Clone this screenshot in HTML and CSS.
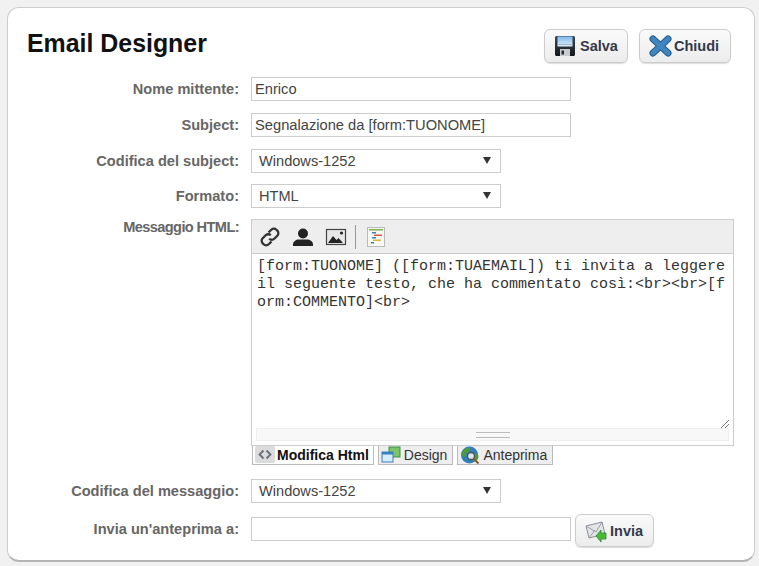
FILE: index.html
```html
<!DOCTYPE html>
<html lang="en">
<head>
  <meta charset="UTF-8">
  <title>Email Designer</title>
  <link rel="stylesheet" href="styles.css">
</head>
<body>
  <div class="panel">
    <div class="head">
      <h1>Email Designer</h1>
      <div class="head-btns">
        <button class="btn btn-salva" type="button">
          <svg width="22" height="22" viewBox="0 0 22 22">
            <defs>
              <linearGradient id="disk" x1="0" y1="0" x2="0" y2="1">
                <stop offset="0" stop-color="#3d4a55"/>
                <stop offset="1" stop-color="#15181b"/>
              </linearGradient>
              <linearGradient id="label" x1="0" y1="0" x2="0" y2="1">
                <stop offset="0" stop-color="#7db8ea"/>
                <stop offset="1" stop-color="#e3effa"/>
              </linearGradient>
            </defs>
            <path d="M1 2.500C1 1.700 1.700 1 2.500 1H20l1 1v17.500c0 .8-.7 1.500-1.500 1.500h-17C1.700 21 1 20.300 1 19.500z" fill="url(#disk)"/>
            <rect x="3.500" y="1.500" width="15" height="10" fill="url(#label)"/>
            <rect x="3.500" y="9" width="15" height="1" fill="#9fb6c8"/>
            <rect x="6" y="14" width="10" height="7" fill="#c8ccd0"/>
            <rect x="7.500" y="15.500" width="2.500" height="4" fill="#23282d"/>
          </svg>
          Salva
        </button>
        <button class="btn btn-chiudi" type="button">
          <svg width="23" height="22" viewBox="0 0 23 22" fill="none" stroke-linecap="round">
            <path d="M4 4l15 14M19 4L4 18" stroke="#245a8a" stroke-width="7"/>
            <path d="M4 4l15 14M19 4L4 18" stroke="#3f86c0" stroke-width="5"/>
          </svg>
          Chiudi
        </button>
      </div>
    </div>

    <div class="row row-first">
      <label>Nome mittente:</label>
      <input class="field" type="text" value="Enrico">
    </div>
    <div class="row">
      <label>Subject:</label>
      <input class="field" type="text" value="Segnalazione da [form:TUONOME]">
    </div>
    <div class="row">
      <label>Codifica del subject:</label>
      <div class="select">Windows-1252<span class="arrow"></span></div>
    </div>
    <div class="row row-tight">
      <label>Formato:</label>
      <div class="select">HTML<span class="arrow"></span></div>
    </div>

    <div class="row row-tight">
      <label class="label-top">Messaggio HTML:</label>
      <div class="editor">
        <div class="toolbar">
          <svg class="tool" width="22" height="22" viewBox="0 0 22 22" fill="none" stroke="#333" stroke-width="2.300">
            <path d="M9.500 6.500l2.800-2.800a3.600 3.600 0 0 1 5.100 0l.9.9a3.600 3.600 0 0 1 0 5.100l-3 3a3.600 3.600 0 0 1-5.100 0"/>
            <path d="M12.500 15.500l-2.800 2.800a3.600 3.600 0 0 1-5.100 0l-.9-.9a3.600 3.600 0 0 1 0-5.100l3-3a3.600 3.600 0 0 1 5.100 0"/>
          </svg>
          <svg class="tool" width="22" height="22" viewBox="0 0 22 22" fill="#222">
            <circle cx="11" cy="7.500" r="5"/>
            <path d="M1 20v-1.500c0-3 3-5 6-5h8c3 0 6 2 6 5V20z"/>
          </svg>
          <svg class="tool" width="22" height="22" viewBox="0 0 22 22">
            <rect x="1.500" y="3.500" width="19" height="15" fill="#e8e8e8" stroke="#444" stroke-width="1.200"/>
            <path d="M3 17l5-7 3.500 4 2-2 4.500 5z" fill="#222"/>
            <circle cx="16.500" cy="7" r="1.600" fill="#222"/>
          </svg>
          <span class="tool-sep"></span>
          <svg class="tool tool-tree" width="20" height="22" viewBox="0 0 20 22">
            <rect x="1.500" y="1.500" width="17" height="19" fill="#f8f8f4" stroke="#b8bcb8"/>
            <rect x="3" y="3" width="14" height="1.500" fill="#7fb24a"/>
            <rect x="6" y="6" width="4" height="1.500" fill="#3a7fc0"/>
            <rect x="8" y="8.500" width="8" height="1.500" fill="#d8584a"/>
            <rect x="6" y="11" width="4" height="1.500" fill="#3a7fc0"/>
            <rect x="7" y="13.500" width="8" height="1.500" fill="#d8b84a"/>
            <rect x="5" y="16" width="3" height="1.500" fill="#3a8f5a"/>
          </svg>
        </div>
        <div class="code-box">
          <div class="code">[form:TUONOME] ([form:TUAEMAIL]) ti invita a leggere il seguente testo, che ha commentato così:&lt;br&gt;&lt;br&gt;[form:COMMENTO]&lt;br&gt;</div>
          <div class="grip"></div>
          <div class="scroll"><span class="scroll-mark"></span></div>
        </div>
        <div class="tabs">
          <div class="tab tab-on">
            <svg width="20" height="17" viewBox="0 0 20 17">
              <rect x="0" y="0" width="20" height="17" rx="2" fill="#dcdcdc"/>
              <path d="M8.500 4.500L4.500 8.500l4 4M11.500 4.500l4 4-4 4" fill="none" stroke="#66707a" stroke-width="1.800"/>
            </svg>
            Modifica Html
          </div>
          <div class="tab">
            <svg width="20" height="17" viewBox="0 0 20 17">
              <rect x="8" y="1" width="11" height="10" fill="#7cc46a" stroke="#3f8f4a"/>
              <rect x="1" y="6" width="11" height="10" fill="#d8ecfa" stroke="#3a7fc0"/>
              <rect x="1" y="6" width="11" height="2.500" fill="#3a7fc0"/>
            </svg>
            Design
          </div>
          <div class="tab">
            <svg width="20" height="18" viewBox="0 0 20 18">
              <circle cx="9.500" cy="9" r="8.500" fill="#2f7fb8"/>
              <path d="M3 5c2-3 6-4 7-2.500S9 6 7 7s-1 5-3 4-3-4-1-6zM13 8c3-1 5.500 0 5.500 2.500S16 16 14 15.500 11 9 13 8z" fill="#4f9a3a"/>
              <circle cx="11" cy="10" r="3.500" fill="#d8e6ee" stroke="#46545e" stroke-width="1.300"/>
              <path d="M13.500 12.500l5 5" stroke="#8a5a2a" stroke-width="2"/>
            </svg>
            Anteprima
          </div>
        </div>
      </div>
    </div>

    <div class="row row-msg">
      <label>Codifica del messaggio:</label>
      <div class="select">Windows-1252<span class="arrow"></span></div>
    </div>
    <div class="row row-send">
      <label>Invia un'anteprima a:</label>
      <input class="field" type="text">
      <button class="btn btn-invia" type="button">
        <svg width="24" height="24" viewBox="0 0 24 24">
          <path d="M1 7l16-4 3 12-16 4z" fill="#e2e4e6" stroke="#8a9096"/>
          <path d="M1 7l10 6 6-10M4 19l6-8" fill="none" stroke="#9aa0a6"/>
          <path d="M11 17l5-6v3h5v6h-5v3z" fill="#4cb83a" stroke="#2a8a28" stroke-width=".8"/>
        </svg>
        Invia
      </button>
    </div>
  </div>
</body>
</html>
```

FILE: styles.css
```css
* {
    padding: 0;
    margin: 0;
    box-sizing: border-box;
}

html,
body {
    height: 100%;
    overflow: hidden;
}

body {
    background-color: #f1f1f1;
    font-family: "Liberation Sans", Arial, sans-serif;
    font-size: 14.6px;
    color: #333;
    padding: 7px 5px 5px 7px;
}

.panel {
    width: 748px;
    height: 555px;
    background-color: #fff;
    border: 1px solid #ccc;
    border-bottom: 2px solid #b4b4b4;
    border-radius: 12px;
    padding: 0 0 0 19px;
}

.head {
    display: flex;
    justify-content: space-between;
    height: 69px;
    padding-right: 23px;
}

h1 {
    font-size: 24.9px;
    line-height: 29px;
    font-weight: bold;
    color: #111;
    margin-top: 21px;
}

.head-btns {
    display: flex;
    gap: 11px;
    margin-top: 21px;
}

.btn {
    display: flex;
    align-items: center;
    height: 34px;
    border: 1px solid #ccc;
    border-radius: 6px;
    background: linear-gradient(#fafafa, #ececec);
    box-shadow: 0 1px 1px #ddd;
    font: bold 14.5px "Liberation Sans", Arial, sans-serif;
    color: #333a4a;
}

.btn-salva {
    width: 84px;
    padding-left: 9px;
    gap: 4px;
}

.btn-chiudi {
    width: 92px;
    padding-left: 9px;
    gap: 2px;
}

.btn-invia {
    width: 79px;
    height: 33px;
    padding-left: 9px;
    gap: 1px;
    margin-left: 4px;
    margin-top: -3px;
}

.row {
    display: flex;
    align-items: center;
    margin-top: 12px;
}

.row-first {
    margin-top: 0;
}

.row-tight {
    margin-top: 11px;
    align-items: flex-start;
}

.row-msg {
    margin-top: 14px;
}

.row-send {
    margin-top: 14px;
    align-items: flex-start;
}

label {
    width: 212px;
    margin-right: 12px;
    text-align: right;
    font-weight: bold;
    color: #666;
    line-height: 24px;
    flex-shrink: 0;
}

.label-top {
    letter-spacing: -.6px;
    line-height: 17px;
}

.field {
    width: 320px;
    height: 24px;
    border: 1px solid #ccc;
    padding: 0 3px;
    font: 14.7px "Liberation Sans", Arial, sans-serif;
    color: #444;
}

.select {
    position: relative;
    width: 250px;
    height: 24px;
    border: 1px solid #ccc;
    padding-left: 7px;
    line-height: 22px;
    color: #444;
}

.arrow {
    position: absolute;
    right: 9px;
    top: 7px;
    border-left: 4px solid transparent;
    border-right: 4px solid transparent;
    border-top: 7px solid #333;
}

.editor {
    width: 483px;
}

.toolbar {
    display: flex;
    align-items: center;
    height: 34px;
    background-color: #eee;
    border: 1px solid #ccc;
    border-bottom: 0;
    padding-left: 7px;
}

.tool {
    margin-right: 11px;
    flex-shrink: 0;
}

.tool-sep {
    width: 1px;
    height: 24px;
    background-color: #999;
    margin-left: -3px;
    margin-right: 10px;
}

.tool-tree {
    margin-right: 0;
}

.code-box {
    position: relative;
    height: 193px;
    border: 1px solid #ccc;
    background-color: #fff;
}

.code {
    padding: 4px 5px 0 5px;
    font: 15px/18px "Liberation Mono", "Courier New", monospace;
    color: #333;
    word-break: break-all;
}

.grip {
    position: absolute;
    right: 4px;
    bottom: 17px;
    width: 8px;
    height: 8px;
    background: linear-gradient(135deg, transparent 45%, #777 45%, #777 55%, transparent 55%, transparent 70%, #777 70%, #777 80%, transparent 80%);
}

.scroll {
    position: absolute;
    left: 4px;
    right: 4px;
    bottom: 4px;
    height: 13px;
    background-color: #f8f8f8;
    border: 1px solid #eee;
    display: flex;
    justify-content: center;
    align-items: center;
}

.scroll-mark {
    width: 34px;
    height: 6px;
    border-top: 1px solid #bbb;
    border-bottom: 1px solid #bbb;
    background: linear-gradient(transparent 40%, #bbb 40%, #bbb 60%, transparent 60%);
}

.tabs {
    display: flex;
    gap: 4px;
    padding-left: 1px;
}

.tab {
    display: flex;
    align-items: center;
    gap: 3px;
    height: 19px;
    padding: 0 5px 1px 2px;
    background-color: #eee;
    border: 1px solid #bbb;
    border-top: 0;
    font-size: 14px;
    color: #333;
}

.tab-on {
    gap: 2px;
    padding: 0 4px 1px 2px;
    background-color: #fff;
    font-weight: bold;
    color: #111;
}
```
